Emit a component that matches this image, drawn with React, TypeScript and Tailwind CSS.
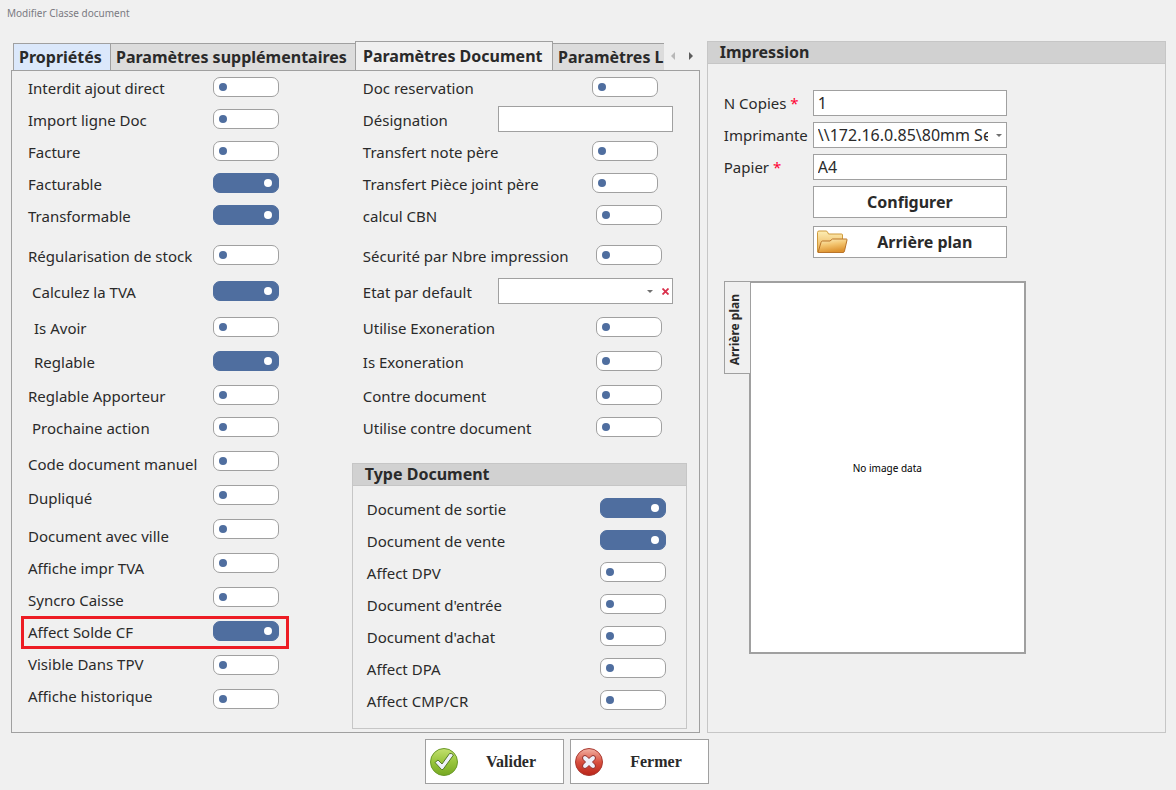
import { useState } from 'react';
import type { ReactNode } from 'react';

type Option = { id: string; label: string; on?: boolean; gap?: string; switchGap?: string; indent?: string; framed?: boolean };

const tabs = [
	{ name: 'Propriétés', style: 'w-[98px] h-[27px] bg-[#dbe8fb] px-[5px]' },
	{ name: 'Paramètres supplémentaires', style: 'w-[246px] h-[27px] bg-[#dcdcdc] -ml-px px-[5px]' },
	{ name: 'Paramètres Document', style: 'w-[198px] h-[30px] -mb-px bg-[#f0f0f0] -ml-px px-[7px] pb-0.5', active: true },
	{ name: 'Paramètres L', style: 'w-[160px] h-[27px] bg-[#dcdcdc] -ml-px px-[5px]' },
];

const general: Option[] = [
	{ id: 'ajout', label: 'Interdit ajout direct' },
	{ id: 'import', label: 'Import ligne Doc', gap: 'mt-3', switchGap: 'mt-3' },
	{ id: 'facture', label: 'Facture', gap: 'mt-3', switchGap: 'mt-3' },
	{ id: 'facturable', label: 'Facturable', on: true, gap: 'mt-3', switchGap: 'mt-3' },
	{ id: 'transformable', label: 'Transformable', on: true, gap: 'mt-3', switchGap: 'mt-3' },
	{ id: 'stock', label: 'Régularisation de stock', gap: 'mt-5', switchGap: 'mt-5' },
	{ id: 'tva', label: 'Calculez la TVA', on: true, gap: 'mt-4', switchGap: 'mt-4', indent: 'pl-1' },
	{ id: 'avoir', label: 'Is Avoir', gap: 'mt-4', switchGap: 'mt-4', indent: 'pl-1.5' },
	{ id: 'reglable', label: 'Reglable', on: true, gap: 'mt-3.5', switchGap: 'mt-3.5', indent: 'pl-1.5' },
	{ id: 'apporteur', label: 'Reglable Apporteur', gap: 'mt-3.5', switchGap: 'mt-3.5' },
	{ id: 'action', label: 'Prochaine action', gap: 'mt-3', switchGap: 'mt-3', indent: 'pl-1' },
	{ id: 'manuel', label: 'Code document manuel', gap: 'mt-4', switchGap: 'mt-3.5' },
	{ id: 'duplique', label: 'Dupliqué', gap: 'mt-3.5', switchGap: 'mt-3.5' },
	{ id: 'ville', label: 'Document avec ville', gap: 'mt-[18px]', switchGap: 'mt-3.5' },
	{ id: 'impr-tva', label: 'Affiche impr TVA', gap: 'mt-3', switchGap: 'mt-3.5' },
	{ id: 'caisse', label: 'Syncro Caisse', gap: 'mt-3', switchGap: 'mt-3.5' },
	{ id: 'solde', label: 'Affect Solde CF', on: true, gap: 'mt-3', switchGap: 'mt-3.5', framed: true },
	{ id: 'tpv', label: 'Visible Dans TPV', gap: 'mt-3', switchGap: 'mt-3.5' },
	{ id: 'historique', label: 'Affiche historique', gap: 'mt-3', switchGap: 'mt-3.5' },
];

const docTypes: Option[] = [
	{ id: 'sortie', label: 'Document de sortie', on: true },
	{ id: 'vente', label: 'Document de vente', on: true },
	{ id: 'dpv', label: 'Affect DPV' },
	{ id: 'entree', label: "Document d'entrée" },
	{ id: 'achat', label: "Document d'achat" },
	{ id: 'dpa', label: 'Affect DPA' },
	{ id: 'cmp', label: 'Affect CMP/CR' },
];

const Toggle = ({ id, on = false }: { id: string; on?: boolean }) => {
	const [checked, setChecked] = useState(on);

	return (
		<input
			id={id}
			type="checkbox"
			role="switch"
			checked={checked}
			onChange={(e) => setChecked(e.target.checked)}
			className="relative block h-5 w-[66px] shrink-0 appearance-none rounded-[7px] border border-[#a0a0a0] bg-white before:absolute before:left-[5px] before:top-[5px] before:h-2 before:w-2 before:rounded-full before:bg-[#4f6e9f] checked:border-[#4f6e9f] checked:bg-[#4f6e9f] checked:before:left-[50px] checked:before:bg-white"
		/>
	);
};

const Row = ({ id, label, gap = '', children }: { id: string; label: string; gap?: string; children: ReactNode }) => (
	<div className={`flex h-5 items-center justify-between ${gap}`}>
		<label htmlFor={id} className="pt-0.5 whitespace-nowrap">
			{label}
		</label>
		{children}
	</div>
);

const Group = ({ title, className = '', children }: { title: string; className?: string; children: ReactNode }) => (
	<section className={`border border-[#c6c6c6] ${className}`}>
		<h2 className="h-[22px] border-b border-[#c6c6c6] bg-[#d1d1d1] pl-3 text-base leading-[21px] font-bold">{title}</h2>
		{children}
	</section>
);

const DownArrow = () => (
	<svg viewBox="0 0 6 3" className="h-[3px] w-1.5 shrink-0" fill="#707070">
		<path d="M0 0h6L3 3z" />
	</svg>
);

const FolderIcon = () => (
	<svg viewBox="0 0 32 24" className="h-6 w-8">
		<defs>
			<linearGradient id="folderBack" x1="0" y1="0" x2="0" y2="1">
				<stop offset="0" stopColor="#fdeeb4" />
				<stop offset="1" stopColor="#e9a94a" />
			</linearGradient>
			<linearGradient id="folderFront" x1="0" y1="0" x2="0.3" y2="1">
				<stop offset="0" stopColor="#fdf0c0" />
				<stop offset="0.5" stopColor="#f3c46e" />
				<stop offset="1" stopColor="#dd9330" />
			</linearGradient>
		</defs>
		<path d="M1.500 22V2.500q0-1.500 1.500-1.500h7q1 0 1.500 1l1 2h13q1 0 1 1V21z" fill="url(#folderBack)" stroke="#cf9a3c" />
		<path
			d="M2 22.500 5 12.500q.5-1.500 1.500-1.500h7.500l2.500-2h14q.7 0 .5 1l-2.500 11q-.3 1.500-1.500 1.500z"
			fill="url(#folderFront)"
			stroke="#b9742a"
		/>
	</svg>
);

const CheckIcon = () => (
	<svg viewBox="0 0 30 30" className="size-[30px]">
		<defs>
			<linearGradient id="greenBall" x1="0" y1="0" x2="0" y2="1">
				<stop offset="0" stopColor="#c3e070" />
				<stop offset="0.5" stopColor="#98c53c" />
				<stop offset="1" stopColor="#76a822" />
			</linearGradient>
		</defs>
		<circle cx="15" cy="15" r="13.500" fill="url(#greenBall)" stroke="#6b9a2a" />
		<path
			d="M6 15.500 9 13l4 4L20.500 6.500q2.500-.5 4 1.500L14 22.500h-1.500z"
			fill="#eef1fa"
			stroke="#55772a"
			strokeLinejoin="round"
		/>
	</svg>
);

const CrossIcon = () => (
	<svg viewBox="0 0 30 30" className="size-[30px]">
		<defs>
			<linearGradient id="redBall" x1="0" y1="0" x2="0" y2="1">
				<stop offset="0" stopColor="#f3b3a5" />
				<stop offset="0.5" stopColor="#d9503f" />
				<stop offset="1" stopColor="#b92318" />
			</linearGradient>
		</defs>
		<circle cx="15" cy="15" r="13.500" fill="url(#redBall)" stroke="#a93a32" />
		<path
			d="M11 8.500q1.500 0 4 3 2.500-3 4-3 2.500 0 2.500 2.500 0 1.500-3 4 3 2.500 3 4 0 2.500-2.500 2.500-1.500 0-4-3-2.500 3-4 3-2.500 0-2.500-2.500 0-1.500 3-4-3-2.500-3-4 0-2.500 2.500-2.500z"
			fill="#eef1fa"
			stroke="#8f2a26"
			strokeLinejoin="round"
		/>
	</svg>
);

const General = () => (
	<div className="flex w-[267px] shrink-0 justify-between pl-4">
		<div className="pt-px">
			{general.map((o) => (
				<div key={o.id} className={`relative h-5 leading-5 whitespace-nowrap ${o.gap ?? ''} ${o.indent ?? ''}`}>
					<label htmlFor={o.id}>{o.label}</label>
					{o.framed && (
						<div className="pointer-events-none absolute -top-1.5 -left-[7px] h-[33px] w-[268px] border-3 border-[#ed1c24]" />
					)}
				</div>
			))}
		</div>
		<div>
			{general.map((o) => (
				<div key={o.id} className={o.switchGap}>
					<Toggle id={o.id} on={o.on} />
				</div>
			))}
		</div>
	</div>
);

const DocumentOptions = () => (
	<div className="flex w-[335px] flex-col">
		<div className="pr-3.5 pl-[11px] [&_input[role=switch]]:mr-[11px]">
			<Row id="reservation" label="Doc reservation">
				<div className="pr-1">
					<Toggle id="reservation" />
				</div>
			</Row>
			<Row id="designation" label="Désignation" gap="mt-3">
				<input id="designation" type="text" className="h-[26px] w-[175px] border border-[#a0a0a0] bg-white px-1" />
			</Row>
			<Row id="note" label="Transfert note père" gap="mt-3">
				<div className="pr-1">
					<Toggle id="note" />
				</div>
			</Row>
			<Row id="piece" label="Transfert Pièce joint père" gap="mt-3">
				<div className="pr-1">
					<Toggle id="piece" />
				</div>
			</Row>
			<Row id="cbn" label="calcul CBN" gap="mt-3">
				<Toggle id="cbn" />
			</Row>
			<Row id="securite" label="Sécurité par Nbre impression" gap="mt-5">
				<Toggle id="securite" />
			</Row>
			<Row id="etat" label="Etat par default" gap="mt-4">
				<div className="flex h-[26px] w-[175px] items-center border border-[#a0a0a0] bg-white pr-px">
					<select id="etat" className="h-full min-w-0 flex-1 appearance-none px-1">
						<option></option>
					</select>
					<DownArrow />
					<button type="button" aria-label="Effacer" className="ml-2 flex size-2.5 items-center justify-center">
						<svg viewBox="0 0 7 7" className="size-[7px]" stroke="#d9304c" strokeWidth="1.800">
							<path d="m.5.5 6 6m0-6-6 6" />
						</svg>
					</button>
				</div>
			</Row>
			<Row id="utilise-exo" label="Utilise Exoneration" gap="mt-4">
				<Toggle id="utilise-exo" />
			</Row>
			<Row id="is-exo" label="Is Exoneration" gap="mt-3.5">
				<Toggle id="is-exo" />
			</Row>
			<Row id="contre" label="Contre document" gap="mt-3.5">
				<Toggle id="contre" />
			</Row>
			<Row id="utilise-contre" label="Utilise contre document" gap="mt-3">
				<Toggle id="utilise-contre" />
			</Row>
		</div>

		<Group title="Type Document" className="mt-[26px] flex-1">
			<div className="flex flex-col gap-3 pt-3 pr-5 pb-[18px] pl-3.5">
				{docTypes.map((o) => (
					<Row key={o.id} id={o.id} label={o.label}>
						<Toggle id={o.id} on={o.on} />
					</Row>
				))}
			</div>
		</Group>
	</div>
);

const Impression = () => (
	<Group title="Impression">
		<div className="grid grid-cols-[89px_194px] items-center gap-y-1.5 pt-[26px] pl-4">
			<label htmlFor="copies">
				N Copies <span className="text-[#ff0033]">*</span>
			</label>
			<input id="copies" type="text" defaultValue="1" className="h-[26px] border border-[#a0a0a0] bg-white px-1 text-base" />

			<label htmlFor="imprimante">Imprimante</label>
			<div className="flex h-[26px] items-center border border-[#a0a0a0] bg-white pr-1">
				<select
					id="imprimante"
					className="mr-2 h-full min-w-0 flex-1 appearance-none overflow-hidden pl-1 text-base text-clip"
				>
					<option>{'\\\\172.16.0.85\\80mm Series Printer'}</option>
				</select>
				<DownArrow />
			</div>

			<label htmlFor="papier">
				Papier <span className="text-[#ff0033]">*</span>
			</label>
			<input id="papier" type="text" defaultValue="A4" className="h-[26px] border border-[#a0a0a0] bg-white px-1 text-base" />

			<button type="button" className="col-start-2 h-8 border border-[#a0a0a0] bg-white text-base font-bold">
				Configurer
			</button>
			<button
				type="button"
				className="col-start-2 mt-0.5 flex h-8 items-center border border-[#a0a0a0] bg-white pl-0.5 text-base font-bold"
			>
				<FolderIcon />
				<span className="flex-1 pr-1">Arrière plan</span>
			</button>
		</div>

		<div className="mt-[23px] flex items-start pl-4">
			<button
				type="button"
				className="z-10 -mr-0.5 flex h-[93px] w-[27px] items-center justify-center border border-[#a0a0a0] bg-[#f0f0f0] pt-1 pr-1 text-xs font-bold"
			>
				<span className="rotate-180 [writing-mode:vertical-rl]">Arrière plan</span>
			</button>
			<div className="flex h-[373px] w-[277px] items-center justify-center border-2 border-[#a0a0a0] bg-white text-[10px] text-black">
				No image data
			</div>
		</div>
	</Group>
);

export default function App() {
	return (
		<main className="min-h-screen bg-[#f0f0f0] pb-1.5 font-['Noto_Sans','DejaVu_Sans',sans-serif] text-[15px] leading-5 text-[#2a2a2a]">
			<h1 className="h-[41px] pt-[3px] pl-[7px] text-[10px] text-[#7a7a82]">Modifier Classe document</h1>

			<div className="grid grid-cols-[3fr_2fr] gap-[7px] pr-2.5 pl-[11px]">
				<div className="flex min-w-0 flex-col">
					<div className="flex h-[29px] items-end pl-0.5">
						<div role="tablist" className="flex w-[651px] items-end overflow-x-clip">
							{tabs.map((tab) => (
								<button
									key={tab.name}
									type="button"
									role="tab"
									aria-selected={!!tab.active}
									className={`shrink-0 border border-b-0 border-[#a0a0a0] text-left text-base font-bold whitespace-nowrap ${tab.style}`}
								>
									{tab.name}
								</button>
							))}
						</div>
						<div className="flex flex-1 items-center gap-3.5 self-center pl-[7px]">
							<button type="button" aria-label="Précédent">
								<svg viewBox="0 0 4 8" className="h-2 w-1" fill="#b8b8b8">
									<path d="M4 0v8L0 4z" />
								</svg>
							</button>
							<button type="button" aria-label="Suivant">
								<svg viewBox="0 0 4 8" className="h-2 w-1" fill="#5c5c5c">
									<path d="M0 0v8l4-4z" />
								</svg>
							</button>
						</div>
					</div>
					<div role="tabpanel" className="flex flex-1 justify-between border border-[#a0a0a0] pt-1.5 pr-3 pb-[3px]">
						<General />
						<DocumentOptions />
					</div>
				</div>
				<Impression />
			</div>

			<footer className="mt-1.5 flex justify-center gap-1.5 pr-[42px] font-['Liberation_Serif',serif] text-base font-bold">
				<button type="button" className="flex h-[45px] w-[139px] items-center border border-[#a0a0a0] bg-white pl-[3px]">
					<CheckIcon />
					<span className="flex-1">Valider</span>
				</button>
				<button type="button" className="flex h-[45px] w-[139px] items-center border border-[#a0a0a0] bg-white pl-[3px]">
					<CrossIcon />
					<span className="flex-1">Fermer</span>
				</button>
			</footer>
		</main>
	);
}
